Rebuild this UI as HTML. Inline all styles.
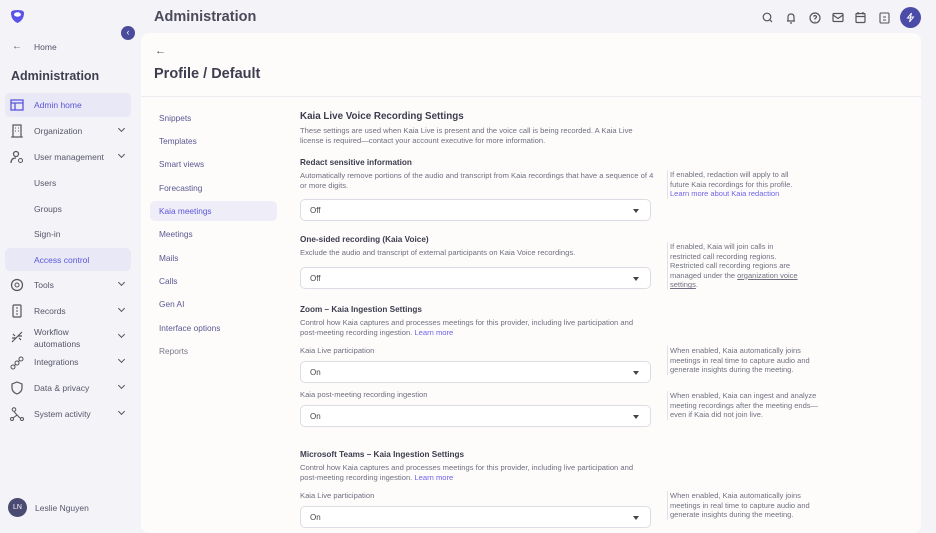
<!DOCTYPE html><html><head><style>
*{margin:0;padding:0;box-sizing:border-box}
body{width:936px;height:526px;overflow:hidden;background:#f4f4f8;font-family:"Liberation Sans",sans-serif;position:relative;color:#4a4a5e}
.a{position:absolute;white-space:nowrap}
.sb{font-size:8.5px;color:#55556a}
.hl{position:absolute;background:#e9e8f7;border-radius:5px}
.ic{position:absolute;width:14px;height:14px}
.chev{position:absolute;left:119px;width:5px;height:5px;border-right:1.3px solid #555;border-bottom:1.3px solid #555;transform:rotate(45deg)}
.card{position:absolute;left:141px;top:33px;width:780px;height:500px;background:#fdfcfb;border-radius:8px}
.nav{font-size:8.3px;color:#5a5890}
.t{font-size:8.2px;font-weight:bold;color:#3c3c4e}
.d{font-size:7.6px;color:#6f6f80;line-height:9.6px;white-space:normal}
.sel{position:absolute;left:300px;width:351px;height:22px;border:1px solid #dcdce4;border-radius:5px;background:#fff;font-size:8px;color:#444;padding:6px 0 0 9px}
.sel:after{content:"";position:absolute;right:11px;top:9px;border-left:3px solid transparent;border-right:3px solid transparent;border-top:4px solid #444}
.h{position:absolute;left:667px;border-left:1px solid #e2e2e8;padding-left:2px;font-size:7.5px;color:#707080;line-height:9.6px;white-space:nowrap}
.lk{color:#6c63e8}
</style></head><body>
<svg class="a" style="left:9px;top:8px" width="17" height="17" viewBox="0 0 17 17"><path d="M2 5Q2 2 8.5 2Q15 2 15 5Q15 12 8.5 15Q2 12 2 5Z" fill="#5b52e8"/><ellipse cx="8.5" cy="6.5" rx="3.5" ry="2.2" fill="#fff"/></svg>
<div class="a" style="left:121px;top:26px;width:14px;height:14px;border-radius:50%;background:#4b4b9b;color:#fff;font-size:9px;text-align:center;line-height:13px">‹</div>
<div class="a" style="left:154px;top:9px;font-size:14.5px;font-weight:bold;color:#4a4a5a">Administration</div>
<div class="a sb" style="left:12px;top:41px;font-size:10px">←</div><div class="a sb" style="left:34px;top:42px">Home</div>
<div class="a" style="left:11px;top:69px;font-size:12.5px;font-weight:bold;color:#3e3e50">Administration</div>
<div class="hl" style="left:5px;top:93px;width:126px;height:24px"></div>
<div class="hl" style="left:5px;top:248px;width:126px;height:23px"></div>
<svg class="ic" style="left:10px;top:98px" viewBox="0 0 14 14"><rect x="1" y="2" width="12" height="10" fill="none" stroke="#5b57d9" stroke-width="1.3"/><path d="M1 5H13M5 5V12" stroke="#5b57d9" stroke-width="1.3"/></svg>
<div class="a sb" style="left:34px;top:100px;color:#5b57d9">Admin home</div>
<svg class="ic" style="left:10px;top:124px" viewBox="0 0 14 14"><rect x="3" y="1" width="8" height="12" fill="none" stroke="#555" stroke-width="1.2"/><path d="M1 13H13M5 4H6M8 4H9M5 7H6M8 7H9" stroke="#555"/></svg>
<div class="a sb" style="left:34px;top:126px">Organization</div><div class="chev" style="top:126px"></div>
<svg class="ic" style="left:10px;top:150px" viewBox="0 0 14 14"><circle cx="6" cy="4" r="2.5" fill="none" stroke="#555" stroke-width="1.2"/><path d="M1 13Q1 8 6 8" fill="none" stroke="#555" stroke-width="1.2"/><circle cx="10.5" cy="10.5" r="2" fill="none" stroke="#555"/></svg>
<div class="a sb" style="left:34px;top:152px">User management</div><div class="chev" style="top:152px"></div>
<div class="a sb" style="left:34px;top:178px">Users</div>
<div class="a sb" style="left:34px;top:204px">Groups</div>
<div class="a sb" style="left:34px;top:229px">Sign-in</div>
<div class="a sb" style="left:34px;top:255px;color:#5b57d9">Access control</div>
<svg class="ic" style="left:10px;top:278px" viewBox="0 0 14 14"><circle cx="7" cy="7" r="5.5" fill="none" stroke="#555" stroke-width="1.2"/><circle cx="7" cy="7" r="2" fill="none" stroke="#555"/></svg>
<div class="a sb" style="left:34px;top:280px">Tools</div><div class="chev" style="top:280px"></div>
<svg class="ic" style="left:10px;top:304px" viewBox="0 0 14 14"><rect x="3" y="1" width="8" height="12" rx="1" fill="none" stroke="#555" stroke-width="1.2"/><path d="M6 4H8M6 7H8M6 10H8" stroke="#555"/></svg>
<div class="a sb" style="left:34px;top:306px">Records</div><div class="chev" style="top:306px"></div>
<svg class="ic" style="left:10px;top:330px" viewBox="0 0 14 14"><path d="M2 12L12 2M3 4L5 6M9 8L11 10M2 8H6M8 6H12" stroke="#555" stroke-width="1.2"/></svg>
<div class="a sb" style="left:34px;top:326px;line-height:12px">Workflow<br>automations</div><div class="chev" style="top:332px"></div>
<svg class="ic" style="left:10px;top:356px" viewBox="0 0 14 14"><circle cx="3" cy="11" r="2" fill="none" stroke="#555"/><circle cx="11" cy="3" r="2" fill="none" stroke="#555"/><circle cx="7" cy="7" r="2" fill="none" stroke="#555"/><path d="M4.5 9.5L5.5 8.5M8.5 5.5L9.5 4.5" stroke="#555"/></svg>
<div class="a sb" style="left:34px;top:357px">Integrations</div><div class="chev" style="top:357px"></div>
<svg class="ic" style="left:10px;top:381px" viewBox="0 0 14 14"><path d="M7 1L12 3V7Q12 11 7 13Q2 11 2 7V3Z" fill="none" stroke="#555" stroke-width="1.2"/></svg>
<div class="a sb" style="left:34px;top:383px">Data &amp; privacy</div><div class="chev" style="top:383px"></div>
<svg class="ic" style="left:10px;top:407px" viewBox="0 0 14 14"><circle cx="4" cy="2.5" r="1.8" fill="none" stroke="#555"/><circle cx="2" cy="12" r="1.5" fill="none" stroke="#555"/><circle cx="12" cy="12" r="1.5" fill="none" stroke="#555"/><path d="M4 4.5L7 8L3 11M7 8L10.5 11.5" fill="none" stroke="#555"/></svg>
<div class="a sb" style="left:34px;top:409px">System activity</div><div class="chev" style="top:409px"></div>
<div class="a" style="left:8px;top:498px;width:19px;height:19px;border-radius:50%;background:#4a4a72;color:#fff;font-size:7px;text-align:center;line-height:19px">LN</div>
<div class="a sb" style="left:35px;top:503px">Leslie Nguyen</div>
<svg class="a" style="left:758px;top:10px" width="120" height="16" viewBox="0 0 120 16" fill="none" stroke="#555" stroke-width="1.2"><circle cx="9" cy="7" r="3.8"/><path d="M12 10L14 12"/><path d="M30 11V7Q30 4 33 4Q36 4 36 7V11ZM29 11H37M32 13H34"/><circle cx="57" cy="8" r="5"/><path d="M55.5 6.5Q57 4.5 58.5 6.5Q58.5 8 57 8.5V9.5M57 11V11.5"/><rect x="75" y="3.5" width="10" height="8" rx="1"/><path d="M75 5L80 8.5L85 5"/><rect x="98" y="3.5" width="9" height="9" rx="1"/><path d="M98 6.5H107M100 2V4.5M105 2V4.5"/></svg>
<svg class="a" style="left:879px;top:12px" width="12" height="12" viewBox="0 0 12 12" fill="none" stroke="#555" stroke-width="1.1"><rect x="1" y="1" width="9" height="10" rx="1"/><path d="M4 5H7M4 8H7"/></svg>
<div class="a" style="left:900px;top:7px;width:21px;height:21px;border-radius:50%;background:#4b4ba8"></div>
<svg class="a" style="left:905px;top:12px" width="11" height="11" viewBox="0 0 11 11"><path d="M6.5 1L2.5 6H5.5L4.5 10L8.5 5H5.5Z" fill="none" stroke="#fff" stroke-width="1"/></svg>
<div class="card"></div>
<div class="a" style="left:141px;top:96px;width:780px;height:1px;background:#ececf0"></div>
<div class="a" style="left:155px;top:45px;font-size:11px;color:#555">←</div>
<div class="a" style="left:154px;top:66px;font-size:14.5px;font-weight:bold;color:#3e3e50">Profile / Default</div>
<div class="hl" style="left:150px;top:201px;width:127px;height:20px;background:#eeedf8"></div>
<div class="a nav" style="left:159px;top:113px">Snippets</div>
<div class="a nav" style="left:159px;top:136px">Templates</div>
<div class="a nav" style="left:159px;top:159px">Smart views</div>
<div class="a nav" style="left:159px;top:183px">Forecasting</div>
<div class="a nav" style="left:159px;top:206px;color:#5b57d9">Kaia meetings</div>
<div class="a nav" style="left:159px;top:229px">Meetings</div>
<div class="a nav" style="left:159px;top:253px">Mails</div>
<div class="a nav" style="left:159px;top:276px">Calls</div>
<div class="a nav" style="left:159px;top:299px">Gen AI</div>
<div class="a nav" style="left:159px;top:323px">Interface options</div>
<div class="a nav" style="left:159px;top:346px;color:#7a7a8c">Reports</div>
<div class="a t" style="left:300px;top:111px;font-size:9.8px">Kaia Live Voice Recording Settings</div>
<div class="a d" style="left:300px;top:126px;width:338px">These settings are used when Kaia Live is present and the voice call is being recorded. A Kaia Live license is required—contact your account executive for more information.</div>
<div class="a t" style="left:300px;top:158px">Redact sensitive information</div>
<div class="a d" style="left:300px;top:171px;width:355px">Automatically remove portions of the audio and transcript from Kaia recordings that have a sequence of 4 or more digits.</div>
<div class="sel" style="top:199px">Off</div>
<div class="h" style="top:170px">If enabled, redaction will apply to all<br>future Kaia recordings for this profile.<br><span class="lk">Learn more about Kaia redaction</span></div>
<div class="a t" style="left:300px;top:235px">One-sided recording (Kaia Voice)</div>
<div class="a d" style="left:300px;top:248px">Exclude the audio and transcript of external participants on Kaia Voice recordings.</div>
<div class="sel" style="top:267px">Off</div>
<div class="h" style="top:242px">If enabled, Kaia will join calls in<br>restricted call recording regions.<br>Restricted call recording regions are<br>managed under the <u>organization voice</u><br><u>settings</u>.</div>
<div class="a t" style="left:300px;top:305px">Zoom – Kaia Ingestion Settings</div>
<div class="a d" style="left:300px;top:318px;width:345px">Control how Kaia captures and processes meetings for this provider, including live participation and post-meeting recording ingestion. <span class="lk">Learn more</span></div>
<div class="a d" style="left:300px;top:346px">Kaia Live participation</div>
<div class="sel" style="top:361px">On</div>
<div class="h" style="top:346px">When enabled, Kaia automatically joins<br>meetings in real time to capture audio and<br>generate insights during the meeting.</div>
<div class="a d" style="left:300px;top:390px">Kaia post-meeting recording ingestion</div>
<div class="sel" style="top:405px">On</div>
<div class="h" style="top:391px">When enabled, Kaia can ingest and analyze<br>meeting recordings after the meeting ends—<br>even if Kaia did not join live.</div>
<div class="a t" style="left:300px;top:450px">Microsoft Teams – Kaia Ingestion Settings</div>
<div class="a d" style="left:300px;top:463px;width:345px">Control how Kaia captures and processes meetings for this provider, including live participation and post-meeting recording ingestion. <span class="lk">Learn more</span></div>
<div class="a d" style="left:300px;top:491px">Kaia Live participation</div>
<div class="sel" style="top:506px">On</div>
<div class="h" style="top:491px">When enabled, Kaia automatically joins<br>meetings in real time to capture audio and<br>generate insights during the meeting.</div>
</body></html>
